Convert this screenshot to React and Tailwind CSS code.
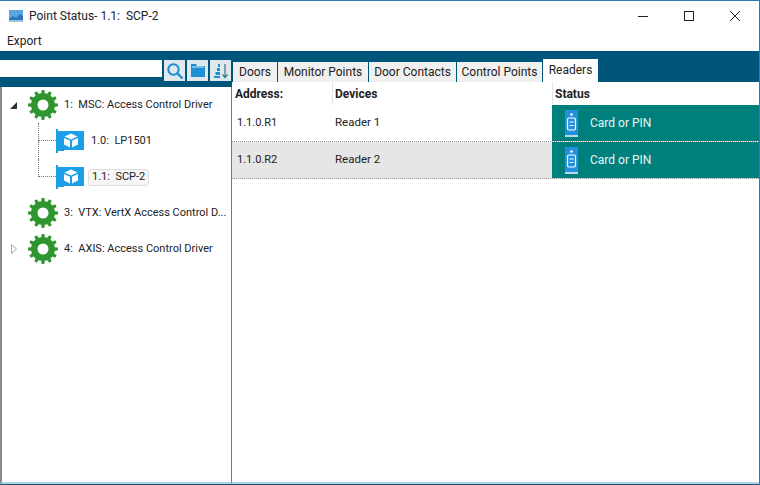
import React from 'react';

const gearPath = () => {
  const teeth = 12;
  const pts = [];
  for (let i = 0; i < teeth; i++) {
    const a = (i / teeth) * Math.PI * 2;
    const step = (Math.PI * 2) / teeth;
    [[-0.5, 12], [-0.28, 12], [-0.18, 15], [0.18, 15], [0.28, 12], [0.5, 12]].forEach(([o, r]) => {
      const t = a + o * step;
      pts.push(`${(15 + r * Math.cos(t)).toFixed(2)} ${(15 + r * Math.sin(t)).toFixed(2)}`);
    });
  }
  return 'M' + pts.join('L') + 'Z M15 9.500a5.500 5.500 0 1 0 0 11a5.500 5.500 0 1 0 0-11Z';
};

const Gear = () => (
  <svg width="30" height="30" viewBox="0 0 30 30" className="shrink-0">
    <path d={gearPath()} fill="#2f962f" fillRule="evenodd" />
  </svg>
);

const Card = () => (
  <svg width="28" height="24" viewBox="0 0 28 24" className="shrink-0">
    <path d="M0 0h2v2h26v19H8v1H2v2H0Z" fill="#1c9fe6" />
    <path d="M15 4.500l6.500 3-6.500 3-6.500-3Z" fill="#fff" />
    <path d="M8 9l6 2.800v6.700l-6-3Z" fill="#fff" />
    <path d="M22 9l-6 2.800v6.700l6-3Z" fill="#fff" />
  </svg>
);

const ReaderIcon = () => (
  <svg width="13" height="27" viewBox="0 0 13 27" className="shrink-0">
    <rect width="13" height="25" fill="#2490dc" />
    <rect y="25" width="13" height="2" fill="#b9d6e4" />
    <circle cx="6.500" cy="4.500" r="1.300" fill="#fff" />
    <rect x="2.500" y="8" width="8" height="12" rx="1.500" fill="none" stroke="#fff" strokeWidth="1.200" />
    <path d="M4.500 12h4M4.500 15.500h4" stroke="#fff" strokeWidth="1.200" />
  </svg>
);

const Connector = ({ last }) => (
  <div className="w-[18px] self-stretch flex flex-col shrink-0">
    <div className="h-[18px] border-l border-b border-dotted border-[#777]"></div>
    {!last && <div className="flex-1 border-l border-dotted border-[#777]"></div>}
  </div>
);

const tabs = [
  ['Doors', 'w-[44px]'],
  ['Monitor Points', 'w-[90px]'],
  ['Door Contacts', 'w-[87px]'],
  ['Control Points', 'w-[85px]'],
];

const readers = [
  { address: '1.1.0.R1', name: 'Reader 1', rowClass: 'h-[37px] bg-white' },
  { address: '1.1.0.R2', name: 'Reader 2', rowClass: 'h-[37px] bg-[#e6e6e6]' },
];

export default function App() {
  return (
    <div className="w-[760px] h-[485px] flex flex-col bg-white text-[12px] text-[#222] overflow-hidden font-[family-name:Roboto,sans-serif] border-t border-[#2b7bb9] border-r border-r-[#2b7bb9]">
      {/* title bar */}
      <div className="h-[30px] flex items-center shrink-0 pl-[9px]">
        <svg width="14" height="12" viewBox="0 0 14 12" className="shrink-0">
          <rect width="14" height="12" fill="#5aa7e0" />
          <path d="M0 9l4-3 3 2 4-4 3 2v6H0Z" fill="#2b78b8" />
          <rect y="10" width="14" height="2" fill="#9fc4dd" />
        </svg>
        <span className="ml-[6px] whitespace-pre">Point Status- 1.1:  SCP-2</span>
        <div className="ml-auto flex items-center">
          <button className="w-[46px] h-[30px] flex items-center justify-center">
            <svg width="10" height="10" viewBox="0 0 10 10"><path d="M0 5.500h10" stroke="#222" /></svg>
          </button>
          <button className="w-[46px] h-[30px] flex items-center justify-center">
            <svg width="10" height="10" viewBox="0 0 10 10"><rect x=".5" y=".5" width="9" height="9" fill="none" stroke="#222" /></svg>
          </button>
          <button className="w-[46px] h-[30px] flex items-center justify-center mr-[1px]">
            <svg width="10" height="10" viewBox="0 0 10 10"><path d="M0 0l10 10M10 0L0 10" stroke="#222" /></svg>
          </button>
        </div>
      </div>

      {/* menu */}
      <div className="h-[20px] flex items-center shrink-0 pl-[7px]">Export</div>

      <div className="flex-1 flex min-h-0">
        {/* left side */}
        <div className="w-[232px] flex flex-col shrink-0">
          <div className="h-[36px] bg-[#00567a] pt-[9px] flex items-start shrink-0">
            <input className="w-[162px] h-[17px] bg-white outline-none" />
            <div className="ml-[2px] flex gap-[2px]">
              <button className="w-[21px] h-[21px] bg-[#dfe8ec] flex items-center justify-center">
                <svg width="18" height="18" viewBox="0 0 18 18">
                  <circle cx="7.500" cy="7.500" r="5.200" fill="none" stroke="#1c8fd6" strokeWidth="2" />
                  <path d="M11.500 11.500l5 5" stroke="#1c8fd6" strokeWidth="2.400" />
                </svg>
              </button>
              <button className="w-[21px] h-[21px] bg-[#dfe8ec] flex items-center justify-center">
                <svg width="16" height="15" viewBox="0 0 16 15">
                  <path d="M1 1h5l1 2h8v11H1Z" fill="#1c8fd6" />
                  <path d="M2 4h12" stroke="#dfe8ec" />
                </svg>
              </button>
              <button className="w-[21px] h-[21px] bg-[#dfe8ec] flex items-center justify-center">
                <svg width="16" height="16" viewBox="0 0 16 16">
                  <path d="M5 1h2v3H5ZM4 5h3v3H4ZM2.500 9H7v3H2.500ZM1 13h6v2H1Z" fill="#1c8fd6" />
                  <path d="M12 1v13M9.500 11.500l2.500 3 2.500-3" stroke="#3a6f8f" fill="none" strokeWidth="1.200" />
                </svg>
              </button>
            </div>
          </div>

          {/* tree */}
          <div className="flex-1 border-l-2 border-r border-l-[#8a8a8a] border-r-[#777] border-b-2 border-b-[#a8d4ee] bg-white text-[11px]">
            <div className="h-[36px] flex items-center">
              <svg width="7" height="7" viewBox="0 0 7 7" className="ml-[8px] shrink-0"><path d="M7 0v7H0Z" fill="#333" /></svg>
              <div className="ml-[11px]"><Gear /></div>
              <span className="ml-[6px] whitespace-pre">1:  MSC: Access Control Driver</span>
            </div>
            <div className="h-[36px] flex items-center ml-[36px]">
              <Connector />
              <Card />
              <span className="ml-[7px] whitespace-pre">1.0:  LP1501</span>
            </div>
            <div className="h-[36px] flex items-center ml-[36px]">
              <Connector last />
              <Card />
              <span className="ml-[4px] px-[3px] h-[17px] flex items-center whitespace-pre bg-[#f6f6f6] border border-[#ddd] rounded-[3px]">1.1:  SCP-2</span>
            </div>
            <div className="h-[36px] flex items-center">
              <div className="ml-[26px]"><Gear /></div>
              <span className="ml-[6px] whitespace-pre">3:  VTX: VertX Access Control D...</span>
            </div>
            <div className="h-[36px] flex items-center">
              <svg width="6" height="10" viewBox="0 0 6 10" className="ml-[9px] shrink-0"><path d="M.5.500l5 4.500-5 4.500Z" fill="#fff" stroke="#aaa" /></svg>
              <div className="ml-[11px]"><Gear /></div>
              <span className="ml-[6px] whitespace-pre">4:  AXIS: Access Control Driver</span>
            </div>
          </div>
        </div>

        {/* right side */}
        <div className="flex-1 flex flex-col min-w-0">
          <div className="h-[31px] bg-[#00567a] flex items-end pl-[1px] shrink-0">
            {tabs.map(([label, width]) => (
              <div key={label} className={`${width} h-[20px] mr-[1px] bg-[#f0f0f0] flex items-center justify-center whitespace-nowrap`}>{label}</div>
            ))}
            <div className="w-[55px] h-[23px] bg-white flex items-center justify-center pb-[1px]">Readers</div>
          </div>

          <div className="flex-1 flex flex-col bg-white border-b-2 border-b-[#a8d4ee]">
            <div className="h-[23px] flex items-center font-bold shrink-0">
              <div className="w-[100px] pl-[3px] h-full flex items-center">Address:</div>
              <div className="w-[220px] pl-[2px] h-full flex items-center border-l border-[#e4e4e4]">Devices</div>
              <div className="flex-1 pl-[2px] h-full flex items-center border-l border-[#e4e4e4]">Status</div>
            </div>
            {readers.map((r) => (
              <div key={r.address} className={`${r.rowClass} flex items-stretch border-b border-dotted border-[#999] shrink-0`}>
                <div className="w-[100px] pl-[5px] flex items-center text-[11px]">{r.address}</div>
                <div className="w-[220px] pl-[3px] flex items-center text-[11.500px]">{r.name}</div>
                <div className="flex-1 bg-[#00807d] text-[#e6f4f2] flex items-center pl-[13px]">
                  <ReaderIcon />
                  <span className="ml-[12px]">Card or PIN</span>
                </div>
              </div>
            ))}
          </div>
        </div>
      </div>

      {/* desktop showing under the window */}
      <div className="h-[1px] bg-[#2e4a63] shrink-0"></div>
    </div>
  );
}
